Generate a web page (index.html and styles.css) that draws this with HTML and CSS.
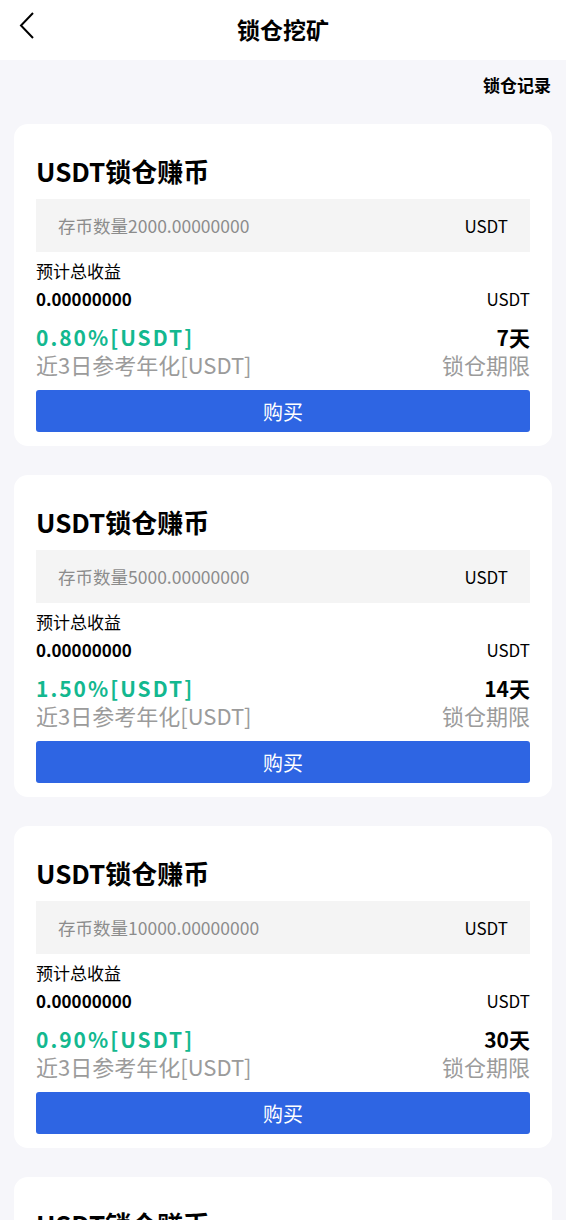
FILE: index.html
```html
<!DOCTYPE html>
<html lang="zh-CN">
<head>
    <meta charset="UTF-8">
    <meta name="viewport" content="width=device-width, initial-scale=1.0">
    <title>锁仓挖矿</title>
    <link rel="stylesheet" href="styles.css">
</head>
<body>

<div class="header">
    <a class="back" href="#">
        <svg width="16" height="28" viewBox="0 0 16 28"><polyline points="14,1 2,13.5 14,26" fill="none" stroke="#000" stroke-width="2"/></svg>
    </a>
    <h1>锁仓挖矿</h1>
</div>

<div class="page">
    <div class="record-link">锁仓记录</div>

    <!-- 7 days -->
    <div class="card">
        <h2>USDT锁仓赚币</h2>
        <div class="amount-box">
            <input type="text" placeholder="存币数量2000.00000000">
            <span>USDT</span>
        </div>
        <div class="label">预计总收益</div>
        <div class="row">
            <span class="bold">0.00000000</span>
            <span>USDT</span>
        </div>
        <div class="row rate-row">
            <span class="rate">0.80%[USDT]</span>
            <span class="days">7天</span>
        </div>
        <div class="row sub-row">
            <span>近3日参考年化[USDT]</span>
            <span>锁仓期限</span>
        </div>
        <button class="button">购买</button>
    </div>

    <!-- 14 days -->
    <div class="card">
        <h2>USDT锁仓赚币</h2>
        <div class="amount-box">
            <input type="text" placeholder="存币数量5000.00000000">
            <span>USDT</span>
        </div>
        <div class="label">预计总收益</div>
        <div class="row">
            <span class="bold">0.00000000</span>
            <span>USDT</span>
        </div>
        <div class="row rate-row">
            <span class="rate">1.50%[USDT]</span>
            <span class="days">14天</span>
        </div>
        <div class="row sub-row">
            <span>近3日参考年化[USDT]</span>
            <span>锁仓期限</span>
        </div>
        <button class="button">购买</button>
    </div>

    <!-- 30 days -->
    <div class="card">
        <h2>USDT锁仓赚币</h2>
        <div class="amount-box">
            <input type="text" placeholder="存币数量10000.00000000">
            <span>USDT</span>
        </div>
        <div class="label">预计总收益</div>
        <div class="row">
            <span class="bold">0.00000000</span>
            <span>USDT</span>
        </div>
        <div class="row rate-row">
            <span class="rate">0.90%[USDT]</span>
            <span class="days">30天</span>
        </div>
        <div class="row sub-row">
            <span>近3日参考年化[USDT]</span>
            <span>锁仓期限</span>
        </div>
        <button class="button">购买</button>
    </div>

    <!-- 60 days -->
    <div class="card">
        <h2>USDT锁仓赚币</h2>
        <div class="amount-box">
            <input type="text" placeholder="存币数量20000.00000000">
            <span>USDT</span>
        </div>
        <div class="label">预计总收益</div>
        <div class="row">
            <span class="bold">0.00000000</span>
            <span>USDT</span>
        </div>
        <div class="row rate-row">
            <span class="rate">1.20%[USDT]</span>
            <span class="days">60天</span>
        </div>
        <div class="row sub-row">
            <span>近3日参考年化[USDT]</span>
            <span>锁仓期限</span>
        </div>
        <button class="button">购买</button>
    </div>
</div>

</body>
</html>
```

FILE: styles.css
```css
body {
    margin: 0;
    font-family: "Noto Sans CJK SC", "Noto Sans", sans-serif;
    color: #000;
    background-color: #f6f6fa;
}
.header {
    position: relative;
    height: 60px;
    background-color: #fff;
    display: flex;
    align-items: center;
    justify-content: center;
}
.header h1 {
    margin: 0;
    font-size: 23px;
    font-weight: bold;
    line-height: 30px;
    margin-top: -2px;
}
.back {
    position: absolute;
    left: 19px;
    top: 12px;
    display: block;
    line-height: 0;
}
.page {
    padding: 13px 0 30px;
}
.record-link {
    text-align: right;
    padding-right: 15px;
    font-size: 17px;
    font-weight: bold;
    line-height: 24px;
    margin-bottom: 27px;
}
.card {
    margin: 0 14px 29px;
    padding: 29px 22px 14px;
    background-color: #fff;
    border-radius: 14px;
}
.card h2 {
    margin: 0 0 10px;
    font-size: 26px;
    font-weight: bold;
    line-height: 36px;
}
.amount-box {
    display: flex;
    align-items: center;
    height: 53px;
    padding: 0 22px;
    background-color: #f4f4f4;
    margin-bottom: 5px;
}
.amount-box input {
    flex: 1;
    min-width: 0;
    border: none;
    outline: none;
    background: transparent;
    padding: 0;
    font-family: inherit;
    font-size: 17.5px;
    color: #000;
}
.amount-box input::placeholder {
    color: #8c8c8c;
}
.amount-box span {
    font-size: 17px;
}
.label {
    font-size: 17px;
    line-height: 28px;
}
.row {
    display: flex;
    justify-content: space-between;
    align-items: center;
    font-size: 17px;
    line-height: 28px;
}
.bold {
    font-weight: bold;
}
.rate-row {
    margin-top: 11px;
    line-height: 26px;
    font-size: 21px;
    font-weight: bold;
}
.rate {
    color: #13b88f;
    letter-spacing: 2px;
}
.sub-row {
    font-size: 22px;
    line-height: 28px;
    color: #9b9b9b;
}
.button {
    display: block;
    width: 100%;
    height: 42px;
    margin-top: 12px;
    background-color: #2e65e3;
    color: #fff;
    border: none;
    border-radius: 3px;
    font-family: inherit;
    font-size: 20px;
    cursor: pointer;
}
```
